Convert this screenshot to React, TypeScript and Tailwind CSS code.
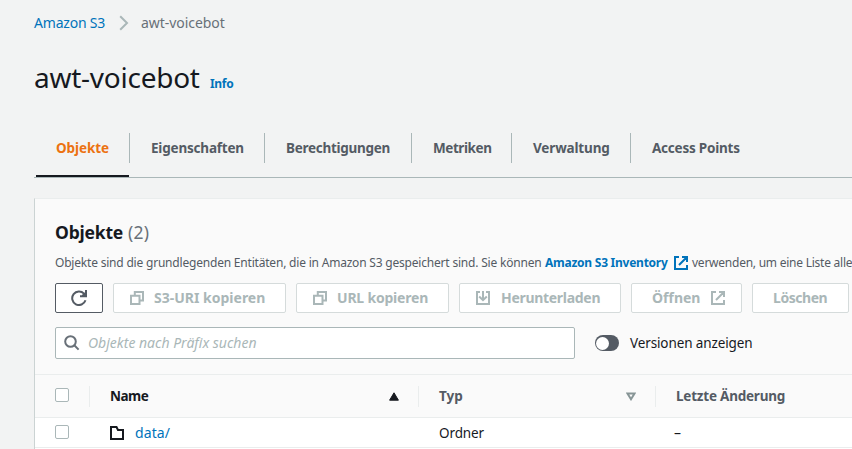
import type { ReactNode } from "react";

const CopyIcon = () => (
  <svg className="size-[14px] shrink-0" viewBox="0 0 14 14" fill="none" stroke="#aab7b8" strokeWidth="2">
    <path d="M1 4.800h8.500V13H1zM4.800 4.500V1H13v8.500H9.800" />
  </svg>
);

const ExternalIcon = ({ className }: { className: string }) => (
  <svg className={className} viewBox="0 0 14 14" fill="none" stroke="currentColor" strokeWidth="2">
    <path d="M5 1H1v12h12V9M8 1h5v5M13 1L5 9" />
  </svg>
);

const DownloadIcon = () => (
  <svg className="size-[14px] shrink-0" viewBox="0 0 14 14" fill="none" stroke="#aab7b8" strokeWidth="2">
    <path d="M4 1H1v12h12V1h-3M7 0v9M3.2 5.500L7 9.200 10.800 5.500" />
  </svg>
);

const Button = ({ children, className }: { children: ReactNode; className: string }) => (
  <button
    className={`flex h-[30px] shrink-0 items-center rounded-[2px] border border-[#d5dbdb] bg-white text-left text-[14px] leading-[20px] font-bold text-[#aab7b8] ${className}`}
  >
    {children}
  </button>
);

const tabs = [
  { label: "Eigenschaften", box: "w-[135px]", text: "tracking-[-0.2px]" },
  { label: "Berechtigungen", box: "w-[147px]", text: "tracking-[-0.28px]" },
  { label: "Metriken", box: "w-[100px]", text: "tracking-[-0.43px]" },
  { label: "Verwaltung", box: "w-[119px]", text: "tracking-[-0.15px]" },
];

export default function App() {
  return (
    <div className="h-[449px] w-[852px] overflow-hidden bg-[#f2f3f3] pl-[34px] font-['Noto_Sans',sans-serif] text-[14px] leading-[20px] whitespace-nowrap text-[#16191f]">
      <nav className="flex h-[46px] items-center">
        <a className="w-[85px] tracking-[-0.2px] text-[#0073bb]">Amazon S3</a>
        <svg className="h-[16px] w-[10px]" viewBox="0 0 10 16" fill="none" stroke="#aab7b8" strokeWidth="2">
          <path d="M1.200 1.200L8 8l-6.800 6.800" />
        </svg>
        <span className="ml-[12px] tracking-[-0.05px] text-[#687078]">awt-voicebot</span>
      </nav>

      <header className="flex h-[87px] items-baseline pt-[13px]">
        <h1 className="w-[176px] text-[28px] leading-[36px] tracking-[-0.25px]">awt-voicebot</h1>
        <a className="text-[12px] font-bold tracking-[-0.3px] text-[#0073bb]">Info</a>
      </header>

      <div className="flex h-[45px] border-b border-[#aab7b8] text-[13.5px] font-bold text-[#545b64]">
        <div className="ml-[2px] h-[44px] w-[93px] border-b-2 border-[#16191f] pt-[5px] pl-[20px] tracking-[-0.1px] text-[#ec7211]">
          Objekte
        </div>
        <div className="h-[30px] w-px bg-[#aab7b8]" />
        {tabs.map((t) => (
          <div key={t.label} className={`h-[30px] shrink-0 border-r border-[#aab7b8] pt-[5px] pl-[21px] ${t.box} ${t.text}`}>
            {t.label}
          </div>
        ))}
        <div className="pt-[5px] pl-[21px] tracking-[-0.22px]">Access Points</div>
      </div>

      <main className="mt-[20px] h-[260px] border-t border-l border-t-[#eaeded] border-l-[#cbd3d3] bg-[#fafafa]">
        <div className="pl-[20px]">
          <h2 className="flex h-[44px] items-end pt-[12px] text-[17.5px] leading-[22px] font-bold tracking-[-0.2px]">
            Objekte<span className="ml-[5px] font-normal tracking-[0.2px] text-[#687078]">(2)</span>
          </h2>
          <p className="mt-[10px] flex h-[20px] items-center text-[12px] text-[#545b64]">
            <span className="w-[490px] shrink-0 tracking-[-0.2px]">
              Objekte sind die grundlegenden Entitäten, die in Amazon S3 gespeichert sind. Sie können
            </span>
            <a className="w-[129px] shrink-0 font-bold tracking-[-0.25px] text-[#0073bb]">Amazon S3 Inventory</a>
            <ExternalIcon className="size-[14px] shrink-0 text-[#0073bb]" />
            <span className="ml-[4px] tracking-[-0.24px]">verwenden, um eine Liste alle</span>
          </p>

          <div className="mt-[10px] flex gap-[10px]">
            <button className="flex h-[30px] w-[48px] shrink-0 items-center justify-center rounded-[2px] border border-[#545b64] bg-white">
              <svg className="size-[16px]" viewBox="0 0 16 16" fill="none" stroke="#545b64" strokeWidth="2">
                <path d="M14.500 10.300A6.800 6.800 0 1 1 13 3.600L15 5.800M15 0v6.200H9M11.500 5.800L14.800 3" />
              </svg>
            </button>
            <Button className="w-[173px] gap-[10px] pl-[16px]">
              <CopyIcon />
              <span>S3-URI kopieren</span>
            </Button>
            <Button className="w-[153px] gap-[10px] pl-[16px]">
              <CopyIcon />
              <span className="tracking-[-0.2px]">URL kopieren</span>
            </Button>
            <Button className="w-[162px] gap-[11px] pl-[16px]">
              <DownloadIcon />
              <span className="tracking-[-0.3px]">Herunterladen</span>
            </Button>
            <Button className="w-[111px] pl-[20px]">
              <span className="w-[59px]">Öffnen</span>
              <ExternalIcon className="size-[14px] shrink-0" />
            </Button>
            <Button className="w-[97px] pl-[20px]">
              <span className="tracking-[-0.45px]">Löschen</span>
            </Button>
          </div>

          <div className="mt-[14px] flex h-[32px] items-center">
            <div className="flex h-[32px] w-[520px] items-center rounded-[2px] border border-[#aab7b8] bg-white pl-[8px]">
              <svg className="size-[16px]" viewBox="0 0 16 16" fill="none" stroke="#687078" strokeWidth="2">
                <circle cx="6.500" cy="6.500" r="5.300" />
                <path d="M10.300 10.300L14.600 14.600" />
              </svg>
              <span className="ml-[8px] text-[#aab7b8] italic">Objekte nach Präfix suchen</span>
            </div>
            <div className="ml-[20px] flex h-[16px] w-[24px] items-center rounded-full bg-[#545b64] pl-[1px]">
              <div className="size-[13px] rounded-full bg-white" />
            </div>
            <span className="ml-[11px] text-[13.5px] tracking-[-0.12px]">Versionen anzeigen</span>
          </div>
        </div>

        <div className="mt-[15px] flex h-[44px] items-center border-y border-[#eaeded] pl-[20px] text-[13.5px] font-bold text-[#545b64]">
          <div className="mb-[2px] size-[14px] rounded-[2px] border border-[#aab7b8] bg-white" />
          <div className="ml-[20px] h-[21px] w-px bg-[#eaeded]" />
          <span className="ml-[20px] w-[279px] tracking-[-0.5px] text-[#16191f]">Name</span>
          <svg className="h-[9px] w-[10px]" viewBox="0 0 10 9" fill="#16191f">
            <path d="M5 .8L9.400 8.200H.6z" stroke="#16191f" strokeLinejoin="round" />
          </svg>
          <div className="ml-[19px] h-[21px] w-px bg-[#eaeded]" />
          <span className="ml-[20px] w-[187px]">Typ</span>
          <svg className="h-[9px] w-[10px]" viewBox="0 0 10 9" fill="none" stroke="#879596" strokeWidth="2">
            <path d="M1.500 1.500h7L5 7.200z" />
          </svg>
          <div className="ml-[19px] h-[21px] w-px bg-[#eaeded]" />
          <span className="ml-[20px] tracking-[-0.22px]">Letzte Änderung</span>
        </div>

        <div className="flex h-[30px] items-center border-b border-[#eaeded] bg-white pl-[20px]">
          <div className="mb-[2px] size-[14px] rounded-[2px] border border-[#aab7b8] bg-white" />
          <svg className="ml-[41px] h-[14px] w-[14px]" viewBox="0 0 14 14" fill="none" stroke="#16191f" strokeWidth="2">
            <path d="M1 1h5.500l1.500 3h5v9H1z" />
          </svg>
          <a className="ml-[11px] w-[304px] tracking-[0.1px] text-[#0073bb]">data/</a>
          <span className="w-[235px] text-[13.5px] tracking-[-0.1px]">Ordner</span>
          <span>–</span>
        </div>
        <div className="h-[4px] bg-white" />
      </main>
    </div>
  );
}
